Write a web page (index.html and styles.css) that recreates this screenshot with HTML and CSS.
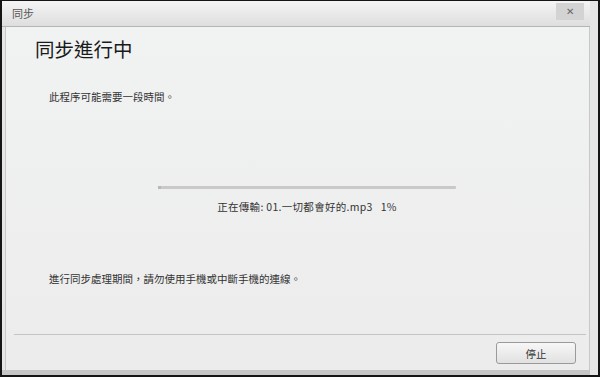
FILE: index.html
```html
<!DOCTYPE html>
<html lang="zh-Hant">
<head>
    <meta charset="UTF-8">
    <title>同步</title>
    <link rel="stylesheet" href="styles.css">
</head>
<body>
    <div id="window">
        <div id="titlebar">
            <span class="title">同步</span>
            <button class="close">✕</button>
        </div>
        <div id="content">
            <div id="main">
                <h1>同步進行中</h1>
                <p class="note">此程序可能需要一段時間。</p>
                <div id="progress">
                    <div class="track"><div class="fill" style="width: 1%;"></div></div>
                    <p class="status">正在傳輸: 01.一切都會好的.mp3&nbsp;&nbsp;&nbsp;1%</p>
                </div>
                <p class="note">進行同步處理期間，請勿使用手機或中斷手機的連線。</p>
            </div>
            <div id="footer">
                <button class="stop">停止</button>
            </div>
        </div>
        <div id="bottom"></div>
    </div>
</body>
</html>
```

FILE: styles.css
```css
html, body {
    margin: 0;
    padding: 0;
    height: 100%;
}
body {
    background: #111;
    font-family: "Noto Sans CJK TC", "Liberation Sans", sans-serif;
    color: #333;
}
#window {
    height: 377px;
    box-sizing: border-box;
    border: 2px solid #151515;
    border-top-width: 1px;
    display: flex;
    flex-direction: column;
    background: #e6e6e6;
}
#titlebar {
    height: 25px;
    flex: none;
    display: flex;
    align-items: flex-start;
    justify-content: space-between;
    background: linear-gradient(#f4f4f4, #dedede);
    border-bottom: 1px solid #b5b5b5;
    margin-right: 8px;
    padding-left: 10px;
}
.title {
    font-size: 11px;
    color: #555;
    line-height: 25px;
}
.close {
    width: 28px;
    height: 17px;
    margin: 2px 6px 0 0;
    padding: 0;
    border: none;
    background: #d3d3d3;
    color: #666;
    font-size: 10px;
    line-height: 17px;
}
#content {
    flex: 1;
    display: flex;
    flex-direction: column;
    background: linear-gradient(#f1f2f2, #ececec);
    margin: 0 8px 0 3px;
    border-left: 1px solid #c8c8c8;
    border-right: 1px solid #c8c8c8;
}
#main {
    flex: 1;
    padding: 9px 0 0 29px;
}
h1 {
    margin: 0;
    font-size: 19.5px;
    font-weight: normal;
    color: #1a1a1a;
    line-height: 26px;
}
.note {
    margin: 0;
    padding-left: 14px;
    font-size: 10.5px;
    line-height: 16px;
    color: #333;
}
#main > .note:first-of-type {
    margin-top: 27px;
}
#progress {
    margin: 81px 0 0 123px;
    width: 298px;
    text-align: center;
}
.track {
    height: 3px;
    background: #c9c9c9;
    border-radius: 1px;
}
.fill {
    height: 100%;
    background: #b8b8b8;
}
.status {
    margin: 10px 0 0;
    font-size: 10.5px;
    line-height: 16px;
    color: #333;
    letter-spacing: 0.3px;
}
#progress + .note {
    margin-top: 56px;
}
#footer {
    flex: none;
    margin: 0 3px 0 8px;
    border-top: 1px solid #c4c4c4;
    padding: 7px 10px 6px 0;
    display: flex;
    justify-content: flex-end;
}
.stop {
    width: 80px;
    height: 22px;
    border: 1px solid #9a9a9a;
    border-radius: 3px;
    background: linear-gradient(#f7f7f7, #e1e1e1);
    font-family: inherit;
    font-size: 10.5px;
    color: #333;
    padding: 0;
}
#bottom {
    height: 5px;
    flex: none;
    background: #c6c6c6;
    margin-right: 8px;
}
```
